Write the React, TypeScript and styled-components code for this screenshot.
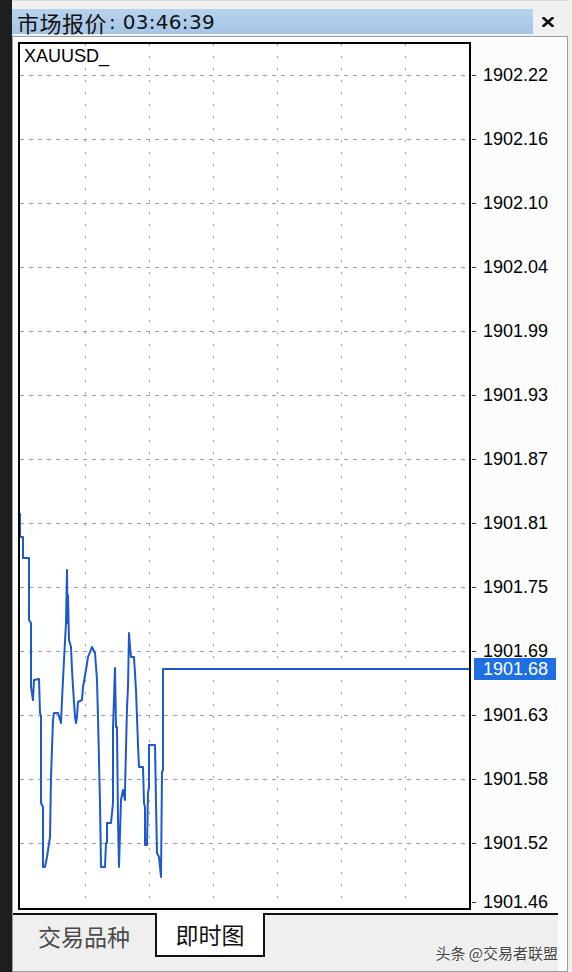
import React from "react";
import styled, { createGlobalStyle } from "styled-components";

const GlobalStyle = createGlobalStyle`
  html, body {
    margin: 0;
    padding: 0;
    background: #f0f0f0;
  }

  body {
    font-family: "Liberation Sans", Arial, sans-serif;
  }
`;

const levels = [
  "1902.22",
  "1902.16",
  "1902.10",
  "1902.04",
  "1901.99",
  "1901.93",
  "1901.87",
  "1901.81",
  "1901.75",
  "1901.69",
  "1901.63",
  "1901.58",
  "1901.52",
  "1901.46",
];

const lastPrice = "1901.68";
// page y of the last price; the scale column starts at y 42
const lastPriceY = 669;
const scaleTop = 42;

const ticks: [number, number][] = [
  [20, 513], [20, 537], [23, 537], [23, 558], [29, 558], [29, 620], [31, 623], [31, 687],
  [33, 700], [34, 680], [39, 679], [40, 713], [41, 716], [41, 803], [43, 807], [43, 867],
  [45, 867], [47, 857], [50, 837], [51, 777], [53, 720], [54, 713], [58, 713], [61, 723],
  [62, 700], [63, 680], [64, 660], [66, 623], [67, 570], [67.5, 623], [68, 595], [69, 640],
  [71, 647], [72, 670], [73, 687], [75, 717], [76, 723], [77, 716], [78, 702], [82, 700],
  [83, 687], [86, 670], [88, 657], [92, 647], [95, 653], [97, 680], [98, 718], [100, 803],
  [101, 867], [105, 867], [106, 843], [107, 843], [107, 823], [111, 823], [113, 803], [113, 728],
  [115, 668], [116, 727], [117, 727], [118, 820], [119, 867], [120, 833], [121, 800], [123, 790],
  [125, 800], [125, 790], [127, 708], [128, 687], [129, 633], [130, 647], [131, 657], [134, 657],
  [136, 690], [138, 745], [139, 767], [143, 767], [144, 803], [145, 807], [145, 845], [147, 845],
  [148, 793], [149, 787], [149, 745], [155, 745], [156, 802], [157, 853], [159, 857], [161, 877],
  [162, 772], [163, 770], [163, lastPriceY], [469, lastPriceY],
];

const rows = Array.from({ length: 13 }, (_, i) => 75 + i * 64);
const cols = Array.from({ length: 6 }, (_, i) => 85 + i * 64);

function CloseIcon() {
  return (
    <svg width="12" height="10" viewBox="0 0 12 10">
      <path d="M1.5 1 L10.5 9 M10.5 1 L1.5 9" stroke="#111" strokeWidth="2.6" strokeLinecap="square" />
    </svg>
  );
}

function TickChart() {
  return (
    <svg width="449" height="864" viewBox="20 44 449 864" style={{ display: "block" }}>
      {rows.map((y) => (
        <line key={`h${y}`} x1="20" x2="469" y1={y + 0.5} y2={y + 0.5} stroke="#9d9d9d" strokeDasharray="4 5" />
      ))}
      {cols.map((x) => (
        <line key={`v${x}`} x1={x + 0.5} x2={x + 0.5} y1="44" y2="908" stroke="#9d9d9d" strokeDasharray="2 10" />
      ))}
      <polyline
        points={ticks.map(([x, y]) => `${x},${y}`).join(" ")}
        fill="none"
        stroke="#1d58cc"
        strokeWidth="2"
        strokeLinejoin="round"
      />
    </svg>
  );
}

export default function App() {
  return (
    <>
      <GlobalStyle />
      <Screen>
        <Edge />
        <Window>
          <TitleRow>
            <Caption>
              <CaptionCjk>市场报价</CaptionCjk>
              <Clock>: 03:46:39</Clock>
            </Caption>
            <Close aria-label="关闭">
              <CloseIcon />
            </Close>
          </TitleRow>
          <Body>
            <ChartRow>
              <Frame>
                <Symbol>XAUUSD_</Symbol>
                <TickChart />
              </Frame>
              <Scale>
                {levels.map((level, i) => (
                  <Level key={level} $last={i === levels.length - 1}>
                    {level}
                  </Level>
                ))}
                <PriceBadge style={{ top: lastPriceY - 11 - scaleTop }}>{lastPrice}</PriceBadge>
              </Scale>
            </ChartRow>
            <TabBar>
              <Tab>交易品种</Tab>
              <Tab $active>即时图</Tab>
              <Watermark>头条 @交易者联盟</Watermark>
            </TabBar>
          </Body>
        </Window>
      </Screen>
    </>
  );
}

const Screen = styled.div`
  width: 572px;
  height: 972px;
  display: flex;
  overflow: hidden;
  background: #f0f0f0;
`;

const Edge = styled.div`
  width: 12px;
  flex-shrink: 0;
  background: #1e1e1e;
`;

const Window = styled.div`
  flex: 1;
  display: flex;
  flex-direction: column;
  padding-right: 4px;
  background: #f0f0f0;
`;

const TitleRow = styled.div`
  display: flex;
  height: 36px;
  padding: 8px 0 2px;
  box-sizing: border-box;
  border-top: 1px solid #d8d8d8;
`;

const Caption = styled.div`
  width: 521px;
  display: flex;
  align-items: center;
  padding-left: 5px;
  box-sizing: border-box;
  background: linear-gradient(#b6d2ee, #a6c6e7);
  color: #111;
`;

const CaptionCjk = styled.span`
  font-family: "Noto Sans CJK SC", "Liberation Sans", sans-serif;
  font-size: 22px;
  line-height: 26px;
  letter-spacing: 0.5px;
`;

const Clock = styled.span`
  font-family: "DejaVu Sans", sans-serif;
  font-size: 20px;
  line-height: 26px;
  margin-left: 2px;
  letter-spacing: 0.3px;
`;

const Close = styled.div`
  flex: 1;
  display: flex;
  align-items: center;
  padding: 0 0 0 9px;
`;

const Body = styled.div`
  flex: 1;
  display: flex;
  flex-direction: column;
  border: 1px solid #9c9c9c;
  background: #fcfcfc;
`;

const ChartRow = styled.div`
  display: flex;
  align-items: flex-start;
  padding: 5px 0 3px 5px;
`;

const Frame = styled.div`
  position: relative;
  width: 453px;
  height: 868px;
  flex-shrink: 0;
  box-sizing: border-box;
  border: 2px solid #000;
  background: #fff;
`;

const Symbol = styled.div`
  position: absolute;
  top: 1px;
  left: 4px;
  font-size: 18px;
  line-height: 22px;
  color: #000;
`;

const Scale = styled.div`
  position: relative;
  flex: 1;
  height: 868px;
  display: flex;
  flex-direction: column;
  padding-top: 1px;
  box-sizing: border-box;
`;

const Level = styled.div<{ $last?: boolean }>`
  position: relative;
  flex-shrink: 0;
  height: ${({ $last }) => ($last ? "54px" : "64px")};
  display: flex;
  align-items: center;
  padding-left: 12px;
  font-size: 18px;
  color: #000;

  &::before {
    content: "";
    position: absolute;
    left: 1px;
    top: 50%;
    width: 4px;
    height: 1px;
    background: #333;
  }
`;

const PriceBadge = styled.div`
  position: absolute;
  left: 3px;
  width: 82px;
  height: 22px;
  display: flex;
  align-items: center;
  padding-left: 9px;
  box-sizing: border-box;
  background: #1f6fe3;
  color: #fff;
  font-size: 18px;
`;

const TabBar = styled.div`
  flex: 1;
  display: flex;
  align-items: flex-start;
  margin-right: 9px;
  border-top: 2px solid #111;
  background: #efefef;
`;

const Tab = styled.div<{ $active?: boolean }>`
  height: ${({ $active }) => ($active ? "44px" : "42px")};
  width: ${({ $active }) => ($active ? "110px" : "142px")};
  margin-top: ${({ $active }) => ($active ? "-2px" : "0")};
  display: flex;
  align-items: center;
  justify-content: center;
  box-sizing: border-box;
  border: ${({ $active }) => ($active ? "2px solid #111" : "none")};
  border-top: none;
  background: ${({ $active }) => ($active ? "#fff" : "transparent")};
  color: ${({ $active }) => ($active ? "#111" : "#4a4a4a")};
  font-family: "Noto Sans CJK SC", sans-serif;
  font-size: 23px;
`;

const Watermark = styled.div`
  margin-left: auto;
  align-self: flex-end;
  margin-bottom: 10px;
  font-family: "Noto Sans CJK SC", sans-serif;
  font-size: 15px;
  line-height: 16px;
  color: #444;
  text-shadow: 0 0 2px #fff, 0 0 2px #fff;
`;
